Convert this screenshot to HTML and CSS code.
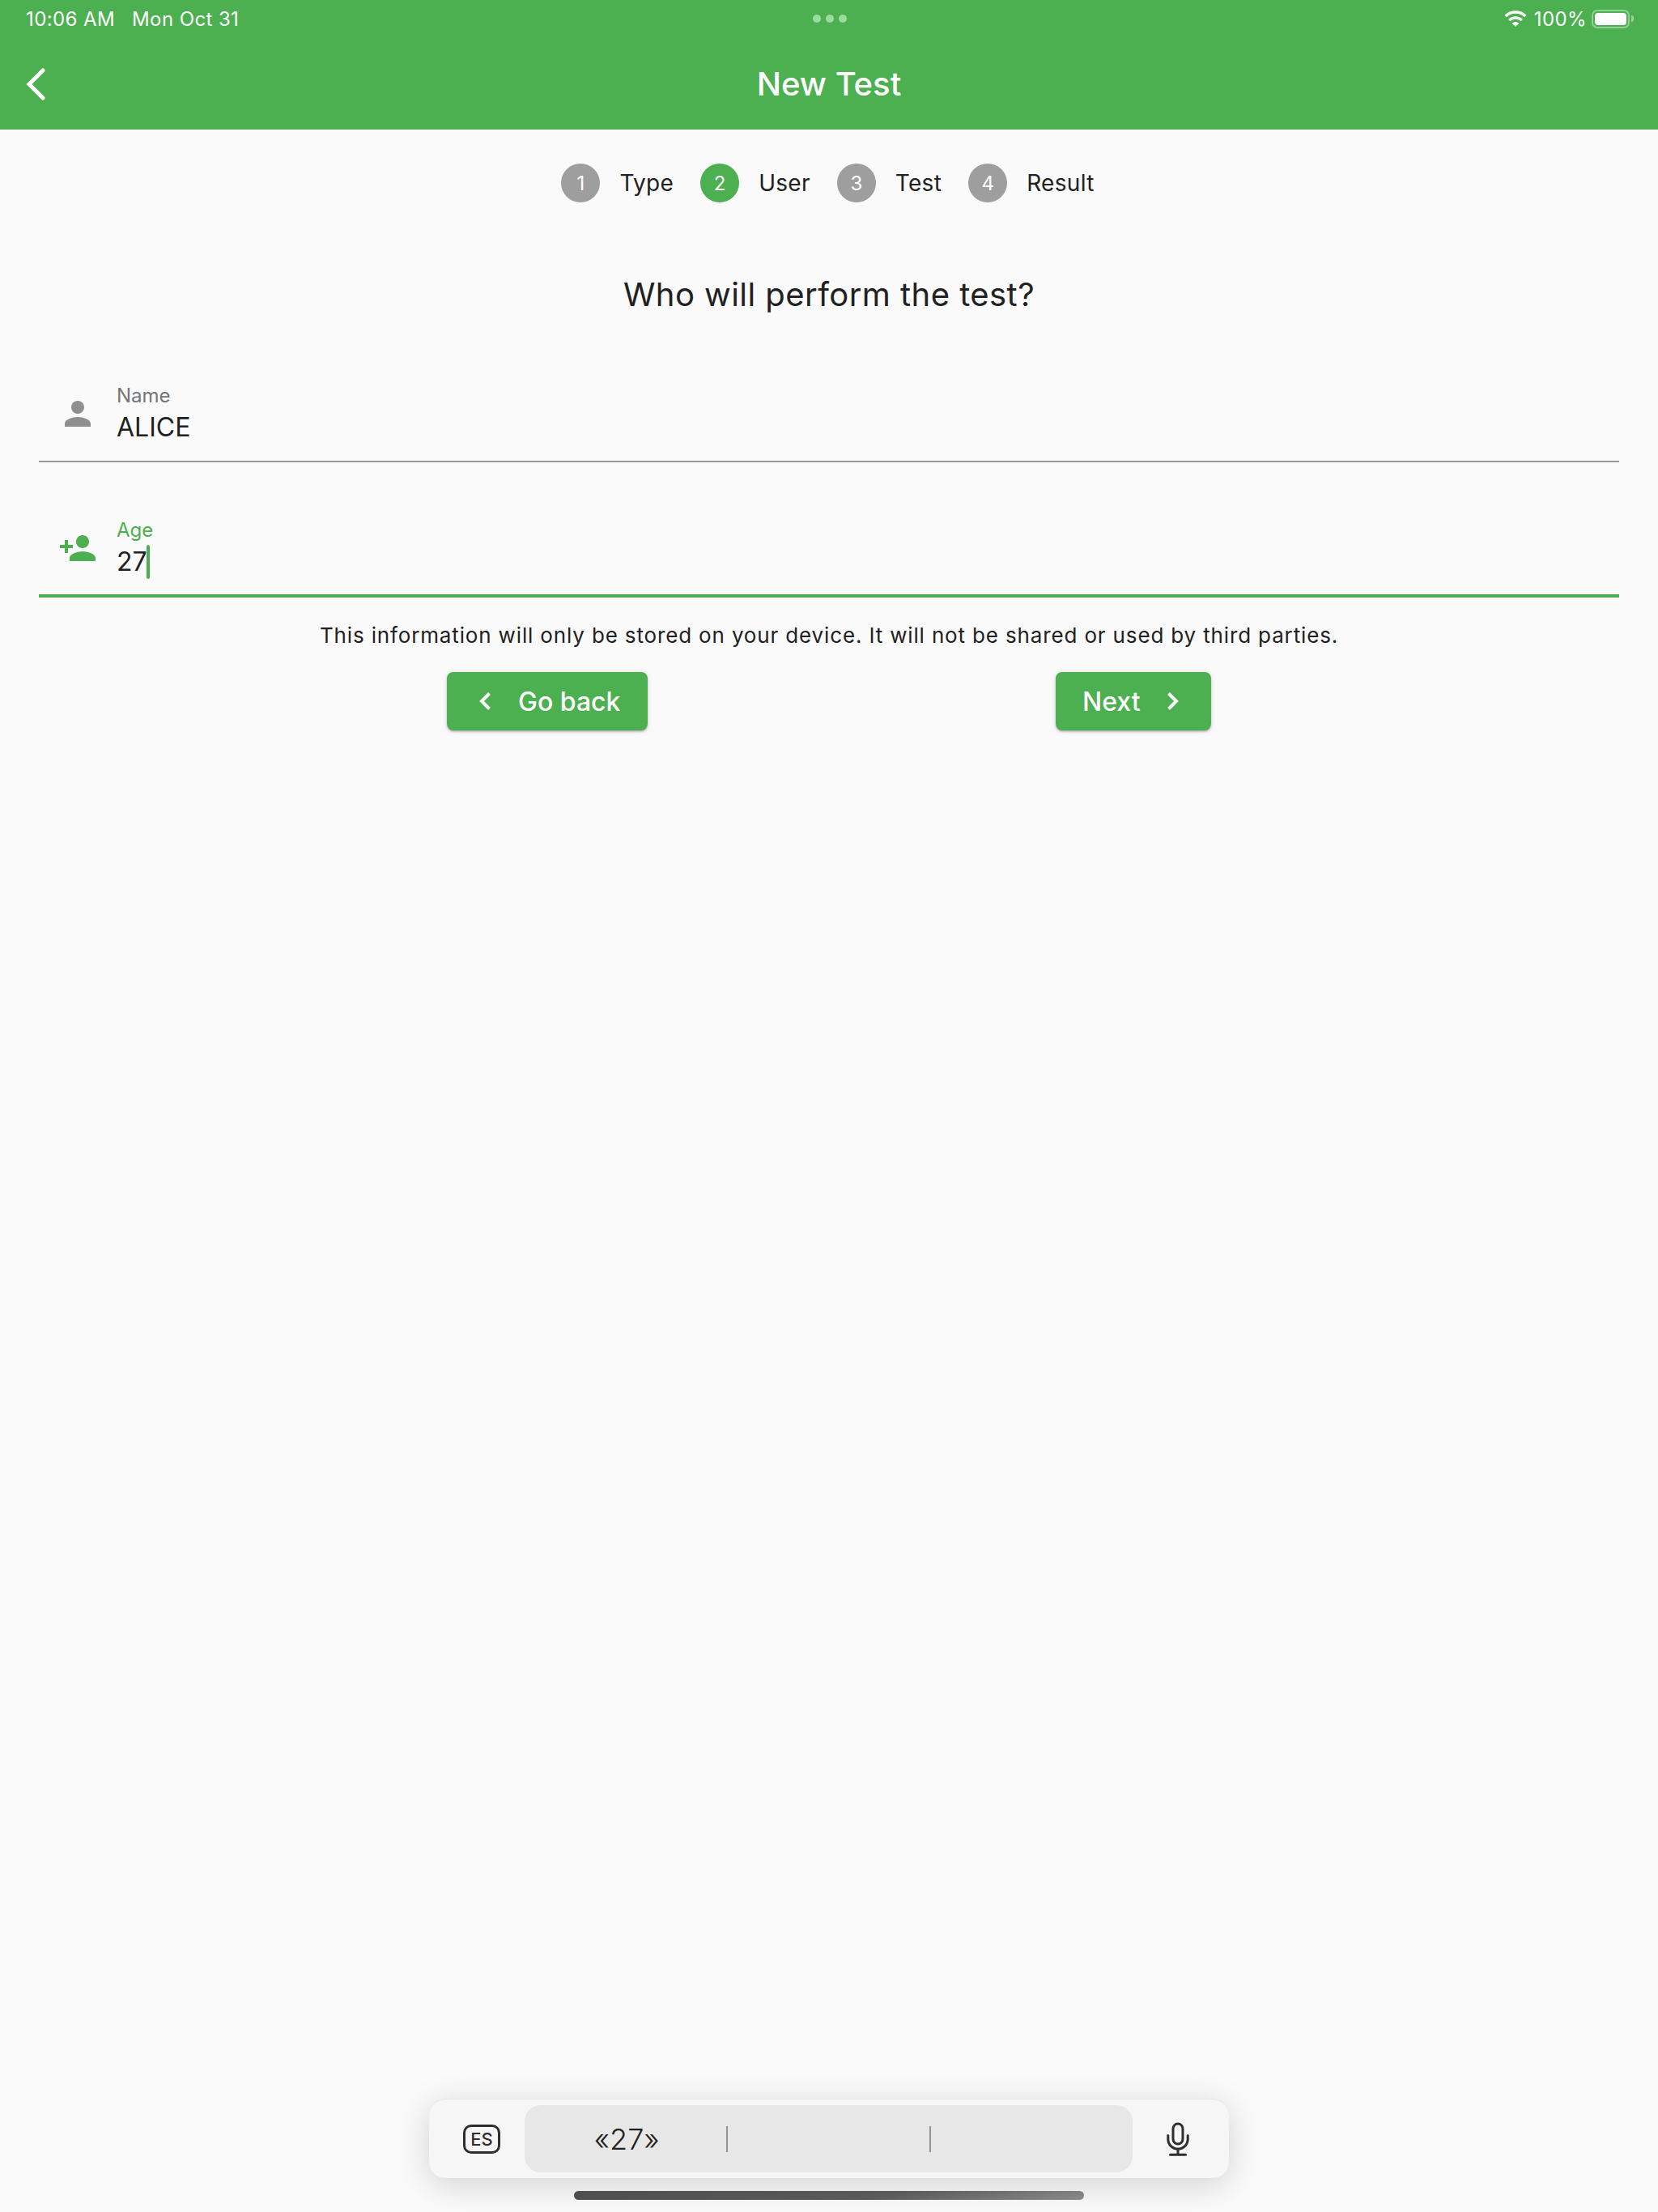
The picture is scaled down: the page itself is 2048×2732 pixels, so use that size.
FILE: index.html
```html
<!DOCTYPE html>
<html lang="en">
<head>
<meta charset="utf-8">
<title>New Test</title>
<link rel="stylesheet" href="styles.css">
</head>
<body>
<div class="page">
  <header class="appbar">
    <div class="status">
      <div class="status-left"><span>10:06 AM</span><span>Mon Oct 31</span></div>
      <div class="dots"><i></i><i></i><i></i></div>
      <div class="status-right">
        <svg class="wifi" viewBox="0 0 28 20" width="28" height="20"><path d="M1.800 7a17.500 17.500 0 0 1 24.400 0M6.300 12a11 11 0 0 1 15.400 0" fill="none" stroke="#fff" stroke-width="3.400"/><path d="M14 20l-4.300-4.300a6 6 0 0 1 8.600 0z" fill="#fff"/></svg>
        <span>100%</span>
        <div class="battery"><div class="battery-fill"></div></div>
        <div class="battery-nub"></div>
      </div>
    </div>
    <div class="toolbar">
      <svg class="back" viewBox="0 0 24 40" width="24" height="40"><path d="M21 3 4 20l17 17" fill="none" stroke="#fff" stroke-width="5" stroke-linecap="round" stroke-linejoin="miter"/></svg>
      <h1 class="title">New Test</h1>
    </div>
  </header>

  <nav class="steps">
    <div class="step"><span class="num">1</span><span class="step-label">Type</span></div>
    <div class="step"><span class="num active">2</span><span class="step-label">User</span></div>
    <div class="step"><span class="num">3</span><span class="step-label">Test</span></div>
    <div class="step"><span class="num">4</span><span class="step-label">Result</span></div>
  </nav>

  <h2 class="heading">Who will perform the test?</h2>

  <div class="field field-name">
    <svg class="field-icon" viewBox="0 0 24 24" width="48" height="48"><path fill="#8f8f8f" d="M12 12c2.210 0 4-1.790 4-4s-1.790-4-4-4-4 1.790-4 4 1.790 4 4 4zm0 2c-2.670 0-8 1.340-8 4v2h16v-2c0-2.660-5.330-4-8-4z"/></svg>
    <div class="field-text">
      <div class="field-label">Name</div>
      <div class="field-value">ALICE</div>
    </div>
  </div>

  <div class="field field-age">
    <svg class="field-icon" viewBox="0 0 24 24" width="48" height="48"><path fill="#4caf50" d="M15 12c2.210 0 4-1.790 4-4s-1.790-4-4-4-4 1.790-4 4 1.790 4 4 4zm-9-2V7H4v3H1v2h3v3h2v-3h3v-2H6zm9 4c-2.670 0-8 1.340-8 4v2h16v-2c0-2.660-5.330-4-8-4z"/></svg>
    <div class="field-text">
      <div class="field-label green">Age</div>
      <div class="field-value">27<span class="caret"></span></div>
    </div>
  </div>

  <p class="note">This information will only be stored on your device. It will not be shared or used by third parties.</p>

  <div class="actions">
    <button class="btn btn-back" type="button">
      <svg viewBox="0 0 16 24" width="16" height="24"><path d="M13.500 2.500 4 12l9.500 9.500" fill="none" stroke="#fff" stroke-width="4"/></svg>
      <span>Go back</span>
    </button>
    <button class="btn btn-next" type="button">
      <span>Next</span>
      <svg viewBox="0 0 16 24" width="16" height="24"><path d="M2.500 2.500 12 12l-9.500 9.500" fill="none" stroke="#fff" stroke-width="4"/></svg>
    </button>
  </div>

  <footer class="kb">
    <div class="kb-bar">
      <div class="kb-side kb-left">
        <span class="es">ES</span>
      </div>
      <div class="suggest">
        <div class="cell">«27»</div>
        <div class="cell sep"></div>
        <div class="cell sep"></div>
      </div>
      <div class="kb-side kb-right">
        <svg class="mic" viewBox="0 0 28 42" width="28" height="42" fill="none" stroke="#2e2e2e" stroke-width="3"><rect x="8" y="2" width="12" height="25" rx="6"/><path d="M1.800 16.500v4.500a12.200 12.200 0 0 0 24.400 0v-4.500M14 33v7M4.500 40.300h19" stroke-linecap="round"/></svg>
      </div>
    </div>
    <div class="home"></div>
  </footer>
</div>
</body>
</html>
```
FILE: styles.css
```css
* { box-sizing: border-box; }
html, body { margin: 0; padding: 0; }
body {
  background: #fafafa;
  font-family: Inter, "Liberation Sans", sans-serif;
  color: #212121;
}
.page {
  width: 2048px;
  height: 2732px;
  display: flex;
  flex-direction: column;
  overflow: hidden;
}
.appbar {
  height: 160px;
  background: #4caf50;
  color: #fff;
  flex: none;
}
.status {
  height: 46px;
  padding: 0 30px 0 32px;
  display: grid;
  grid-template-columns: 1fr auto 1fr;
  align-items: center;
  font-size: 24px;
  letter-spacing: .4px;
  color: #fff;
}
.status-left { display: flex; gap: 21px; }
.dots { display: flex; gap: 6px; }
.dots i {
  width: 10px;
  height: 10px;
  border-radius: 50%;
  background: #9ade9c;
}
.status-right {
  display: flex;
  align-items: center;
  justify-content: flex-end;
}
.wifi { margin-right: 9px; }
.battery {
  width: 47px;
  height: 23px;
  border: 2px solid rgba(255, 255, 255, .4);
  border-radius: 7px;
  padding: 2px;
  margin-left: 6px;
}
.battery-fill { width: 100%; height: 100%; background: #fff; border-radius: 4px; }
.battery-nub {
  width: 3px;
  height: 8px;
  margin-left: 2px;
  background: rgba(255, 255, 255, .45);
  border-radius: 0 3px 3px 0;
}
.toolbar {
  height: 114px;
  display: flex;
  align-items: center;
  justify-content: center;
  position: relative;
}
.back { position: absolute; left: 32px; top: 38px; }
.title {
  margin: 1px 0 0;
  font-size: 40px;
  font-weight: 500;
  line-height: 1;
}
.steps {
  display: flex;
  justify-content: center;
  margin-top: 42px;
  padding-right: 3px;
  height: 48px;
}
.step { display: flex; align-items: center; margin-right: 33px; }
.step:last-child { margin-right: 0; }
.num {
  width: 48px;
  height: 48px;
  border-radius: 50%;
  background: #9e9e9e;
  color: #fff;
  font-size: 24px;
  display: flex;
  align-items: center;
  justify-content: center;
}
.num.active { background: #4caf50; }
.step-label {
  margin-left: 24px;
  font-size: 28px;
  letter-spacing: .3px;
}
.heading {
  margin: 90px 0 0;
  height: 48px;
  line-height: 48px;
  font-size: 40px;
  font-weight: 400;
  letter-spacing: .45px;
  text-align: center;
}
.field {
  margin: 0 48px;
  display: flex;
  align-items: flex-end;
  position: relative;
}
.field-name {
  margin-top: 72px;
  height: 111px;
  border-bottom: 2px solid #999;
}
.field-age {
  margin-top: 56px;
  height: 111px;
  border-bottom: 4px solid #4caf50;
}
.field-icon { flex: none; margin: 0 24px 34px 24px; }
.field-age .field-icon { margin: 0 24px 33px 24px; }
.field-text { height: 78px; margin-bottom: 17px; }
.field-age .field-text { margin-bottom: 16px; }
.field-label { font-size: 24px; line-height: 30px; color: #757575; }
.field-label.green { color: #4caf50; }
.field-value {
  font-size: 32px;
  line-height: 48px;
  display: flex;
  align-items: center;
}
.caret {
  width: 4px;
  height: 42px;
  margin-left: -1px;
  border-radius: 2px;
  background: #4caf50;
}
.note {
  margin: 27px 0 0;
  height: 40px;
  line-height: 40px;
  font-size: 26px;
  letter-spacing: .85px;
  text-align: center;
}
.actions {
  display: flex;
  justify-content: center;
  gap: 504px;
  margin-top: 25px;
}
.btn {
  height: 72px;
  display: flex;
  align-items: center;
  border: 0;
  border-radius: 8px;
  background: #4caf50;
  color: #fff;
  font-family: inherit;
  font-size: 32px;
  font-weight: 500;
  box-shadow: 0 3px 2px -2px rgba(0, 0, 0, .2), 0 2px 3px rgba(0, 0, 0, .14), 0 1px 6px rgba(0, 0, 0, .12);
}
.btn-back { width: 248px; padding: 0 0 0 39px; gap: 33px; }
.btn-next { width: 192px; padding: 0 0 0 33px; gap: 32px; }
.kb {
  margin-top: auto;
  display: flex;
  flex-direction: column;
  align-items: center;
  padding-bottom: 15px;
}
.kb-bar {
  width: 988px;
  height: 98px;
  padding: 7px 0;
  display: flex;
  align-items: stretch;
  justify-content: space-between;
  border-radius: 20px;
  background: #f6f6f6;
  border-top: 1px solid #e6e6e6;
  box-shadow: 0 8px 40px rgba(0, 0, 0, .16);
}
.kb-side {
  width: 118px;
  flex: none;
  display: flex;
  align-items: center;
  justify-content: center;
}
.kb-left { padding-left: 12px; }
.kb-right { width: 119px; padding-right: 8px; }
.es {
  width: 46px;
  height: 36px;
  border: 3px solid #2e2e2e;
  border-radius: 10px;
  font-size: 22px;
  font-weight: 500;
  line-height: 30px;
  text-align: center;
  color: #2e2e2e;
}
.suggest {
  flex: 1;
  display: flex;
  background: #e6e7e6;
  border-radius: 20px;
}
.cell {
  flex: 1;
  display: flex;
  align-items: center;
  justify-content: center;
  font-size: 36px;
  font-weight: 300;
  padding-left: 2px;
  position: relative;
}
.sep::before {
  content: "";
  position: absolute;
  left: -1px;
  top: 26px;
  width: 2px;
  height: 32px;
  background: #949494;
}
.mic { display: block; }
.home {
  width: 630px;
  height: 11px;
  margin-top: 16px;
  border-radius: 6px;
  background: linear-gradient(170deg, #4e4e4e 0%, #5a5a5a 60%, #8a8a8a 100%);
}
```
